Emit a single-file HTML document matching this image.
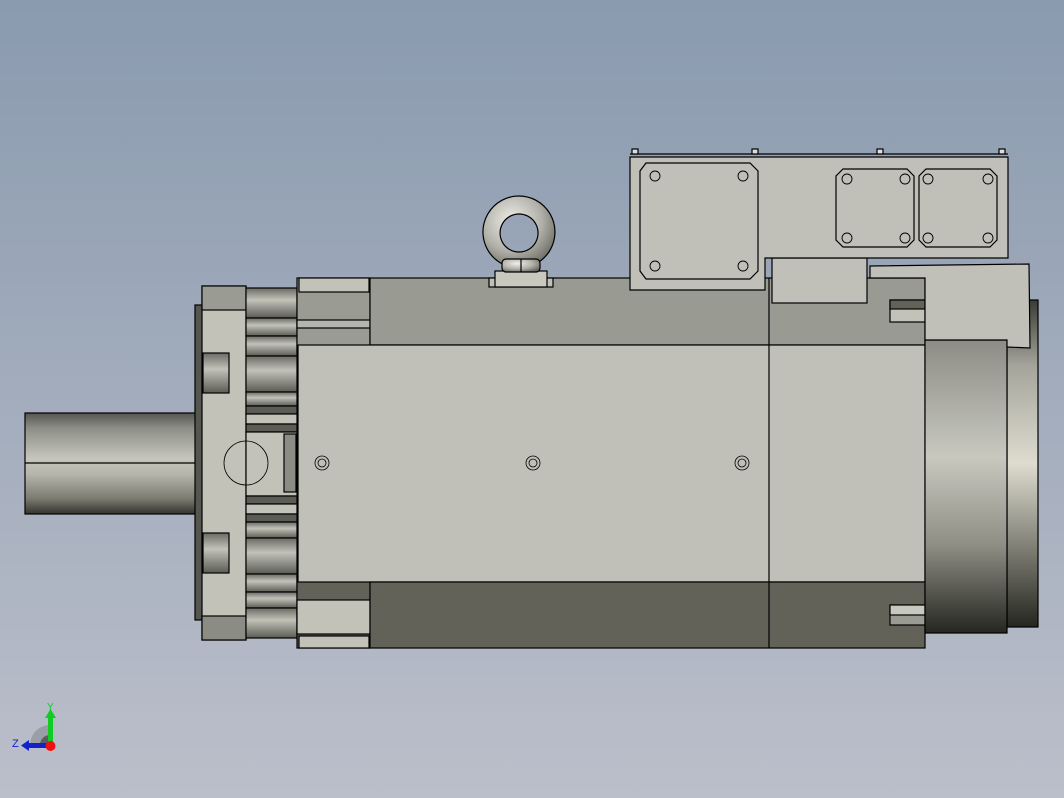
<!DOCTYPE html>
<html><head><meta charset="utf-8"><style>
html,body{margin:0;padding:0;width:1064px;height:798px;overflow:hidden}
svg{display:block}
</style></head><body>
<svg width="1064" height="798" viewBox="0 0 1064 798" xmlns="http://www.w3.org/2000/svg" font-family="Liberation Sans, sans-serif">
<defs>
<linearGradient id="bg" x1="0" y1="0" x2="0" y2="1"><stop offset="0" stop-color="#8a9aaf"/><stop offset="1" stop-color="#bbbfca"/></linearGradient>
<linearGradient id="cyl" x1="0" y1="0" x2="0" y2="1"><stop offset="0" stop-color="#55564f"/><stop offset="0.15" stop-color="#8d8e86"/><stop offset="0.45" stop-color="#c6c6bd"/><stop offset="0.6" stop-color="#b6b6ac"/><stop offset="0.85" stop-color="#7a7a70"/><stop offset="1" stop-color="#33342e"/></linearGradient>
<linearGradient id="ring" x1="0" y1="0" x2="0" y2="1"><stop offset="0" stop-color="#8c8d85"/><stop offset="0.4" stop-color="#c8c8bf"/><stop offset="0.7" stop-color="#8e8e85"/><stop offset="1" stop-color="#25261f"/></linearGradient>
<linearGradient id="ring2" x1="0" y1="0" x2="0" y2="1"><stop offset="0" stop-color="#3a3b35"/><stop offset="0.2" stop-color="#a4a49b"/><stop offset="0.5" stop-color="#dedccf"/><stop offset="0.8" stop-color="#6f6f66"/><stop offset="1" stop-color="#25261f"/></linearGradient>
<linearGradient id="rib" x1="0" y1="0" x2="0" y2="1"><stop offset="0" stop-color="#6a6b63"/><stop offset="0.4" stop-color="#c2c2b9"/><stop offset="1" stop-color="#5b5c54"/></linearGradient>
<radialGradient id="eye" cx="0.4" cy="0.35" r="0.7"><stop offset="0" stop-color="#f0f0ea"/><stop offset="0.6" stop-color="#b0b0a8"/><stop offset="1" stop-color="#6a6a64"/></radialGradient>
</defs>
<rect width="1064" height="798" fill="url(#bg)"/>
<g stroke="#000" stroke-width="1.2">
<rect x="25" y="413" width="171" height="101" fill="url(#cyl)"/>
<line x1="25" y1="463" x2="202" y2="463"/>
<rect x="195" y="305" width="8" height="315" fill="#55564f"/>
<rect x="202" y="286" width="44" height="354" fill="#c2c2b9"/>
<rect x="202" y="286" width="44" height="24" fill="#9a9b93"/>
<rect x="202" y="616" width="44" height="24" fill="#8b8c84"/>
<rect x="203" y="353" width="26" height="40" fill="url(#rib)"/>
<rect x="203" y="533" width="26" height="40" fill="url(#rib)"/>
<rect x="246" y="288" width="51" height="30" fill="url(#rib)"/>
<rect x="246" y="318" width="51" height="18" fill="url(#rib)"/>
<rect x="246" y="336" width="51" height="20" fill="url(#rib)"/>
<rect x="246" y="356" width="51" height="36" fill="url(#rib)"/>
<rect x="246" y="392" width="51" height="14" fill="url(#rib)"/>
<rect x="246" y="406" width="51" height="8" fill="#5b5c54"/>
<rect x="246" y="414" width="51" height="10" fill="#c2c2b9"/>
<rect x="246" y="424" width="51" height="8" fill="#5b5c54"/>
<rect x="246" y="432" width="51" height="64" fill="#c2c2b9"/>
<rect x="284" y="434" width="12" height="58" fill="#8b8c84"/>
<rect x="246" y="496" width="51" height="8" fill="#5b5c54"/>
<rect x="246" y="504" width="51" height="10" fill="#c2c2b9"/>
<rect x="246" y="514" width="51" height="8" fill="#5b5c54"/>
<rect x="246" y="522" width="51" height="16" fill="url(#rib)"/>
<rect x="246" y="538" width="51" height="36" fill="url(#rib)"/>
<rect x="246" y="574" width="51" height="18" fill="url(#rib)"/>
<rect x="246" y="592" width="51" height="16" fill="url(#rib)"/>
<rect x="246" y="608" width="51" height="30" fill="url(#rib)"/>
<circle cx="246" cy="463" r="22" fill="none" stroke-width="0.8"/>
<rect x="297" y="278" width="73" height="74" fill="#9a9b93"/>
<rect x="299" y="278" width="70" height="14" fill="#c2c2b9"/>
<rect x="297" y="320" width="73" height="8" fill="#b5b5ac"/>
<rect x="297" y="576" width="73" height="72" fill="#626259"/>
<rect x="297" y="600" width="73" height="34" fill="#c2c2b9"/>
<rect x="299" y="636" width="70" height="12" fill="#c2c2b9"/>
<rect x="370" y="278" width="555" height="67" fill="#999a92"/>
<rect x="298" y="345" width="627" height="237" fill="#c0c0b8"/>
<rect x="370" y="582" width="555" height="66" fill="#626259"/>
<line x1="769" y1="278" x2="769" y2="648"/>
<rect x="890" y="300" width="35" height="22" fill="#c2c2b9"/>
<rect x="890" y="300" width="35" height="9" fill="#626259"/>
<rect x="890" y="605" width="35" height="20" fill="#9a9b93"/>
<rect x="890" y="605" width="35" height="10" fill="#c8c8bf"/>
<circle cx="322" cy="463" r="7" fill="none" stroke-width="0.8"/><circle cx="322" cy="463" r="4" fill="none" stroke-width="0.8"/>
<circle cx="533" cy="463" r="7" fill="none" stroke-width="0.8"/><circle cx="533" cy="463" r="4" fill="none" stroke-width="0.8"/>
<circle cx="742" cy="463" r="7" fill="none" stroke-width="0.8"/><circle cx="742" cy="463" r="4" fill="none" stroke-width="0.8"/>
<rect x="1007" y="300" width="31" height="327" fill="url(#ring2)"/>
<rect x="925" y="340" width="82" height="293" fill="url(#ring)"/>
<polygon points="870,266 1029,264 1030,348 1007,347 1007,340 925,340 925,278 870,278" fill="#c0c0b8"/>
<rect x="772" y="258" width="95" height="45" fill="#c0c0b8"/>
<polygon points="630,157 1008,157 1008,258 765,258 765,290 630,290" fill="#c0c0b8"/>
<line x1="630" y1="154" x2="1008" y2="154"/>
<path d="M646,163 H750 L758,171 V271 L750,279 H646 L640,271 V171 Z" fill="none"/>
<path d="M843,169 H907 L914,176 V240 L907,247 H843 L836,240 V176 Z" fill="none"/>
<path d="M926,169 H990 L997,176 V240 L990,247 H926 L919,240 V176 Z" fill="none"/>
<g fill="none" stroke-width="0.9">
<circle cx="655" cy="176" r="5"/><circle cx="743" cy="176" r="5"/><circle cx="655" cy="266" r="5"/><circle cx="743" cy="266" r="5"/>
<circle cx="847" cy="179" r="5"/><circle cx="905" cy="179" r="5"/><circle cx="847" cy="238" r="5"/><circle cx="905" cy="238" r="5"/>
<circle cx="928" cy="179" r="5"/><circle cx="988" cy="179" r="5"/><circle cx="928" cy="238" r="5"/><circle cx="988" cy="238" r="5"/>
</g>
<rect x="632" y="149" width="6" height="5" fill="#ddd"/><rect x="752" y="149" width="6" height="5" fill="#ddd"/>
<rect x="877" y="149" width="6" height="5" fill="#ddd"/><rect x="999" y="149" width="6" height="5" fill="#ddd"/>
<rect x="489" y="278" width="64" height="9" fill="#c0c0b8"/>
<rect x="495" y="271" width="52" height="16" fill="#c8c8bf"/>
<path d="M519,196 A36,36 0 1 1 518.9,196 Z M519,214 A19,19 0 1 0 519.1,214 Z" fill="url(#eye)" fill-rule="evenodd"/>
<rect x="502" y="259" width="38" height="13" rx="4" fill="url(#eye)"/>
<line x1="521" y1="259" x2="521" y2="272"/>
</g>
<path d="M30,745 A20,20 0 0 1 50,725 V745 Z" fill="#9a9ea6"/>
<path d="M40,745 A10,10 0 0 1 50,735 V745 Z" fill="#5a5e64"/>
<rect x="48" y="716" width="5" height="28" fill="#11cc22"/><polygon points="45,718 50.5,709 56,718" fill="#11cc22"/>
<rect x="27" y="743" width="23" height="5" fill="#1122cc"/><polygon points="29,740 21,745.5 29,751" fill="#1122cc"/>
<circle cx="50.5" cy="746" r="5" fill="#ee1111"/>
<text x="47" y="710" font-size="10" fill="#11cc22">Y</text>
<text x="12" y="747" font-size="11" fill="#1122cc">Z</text>
</svg>
</body></html>
